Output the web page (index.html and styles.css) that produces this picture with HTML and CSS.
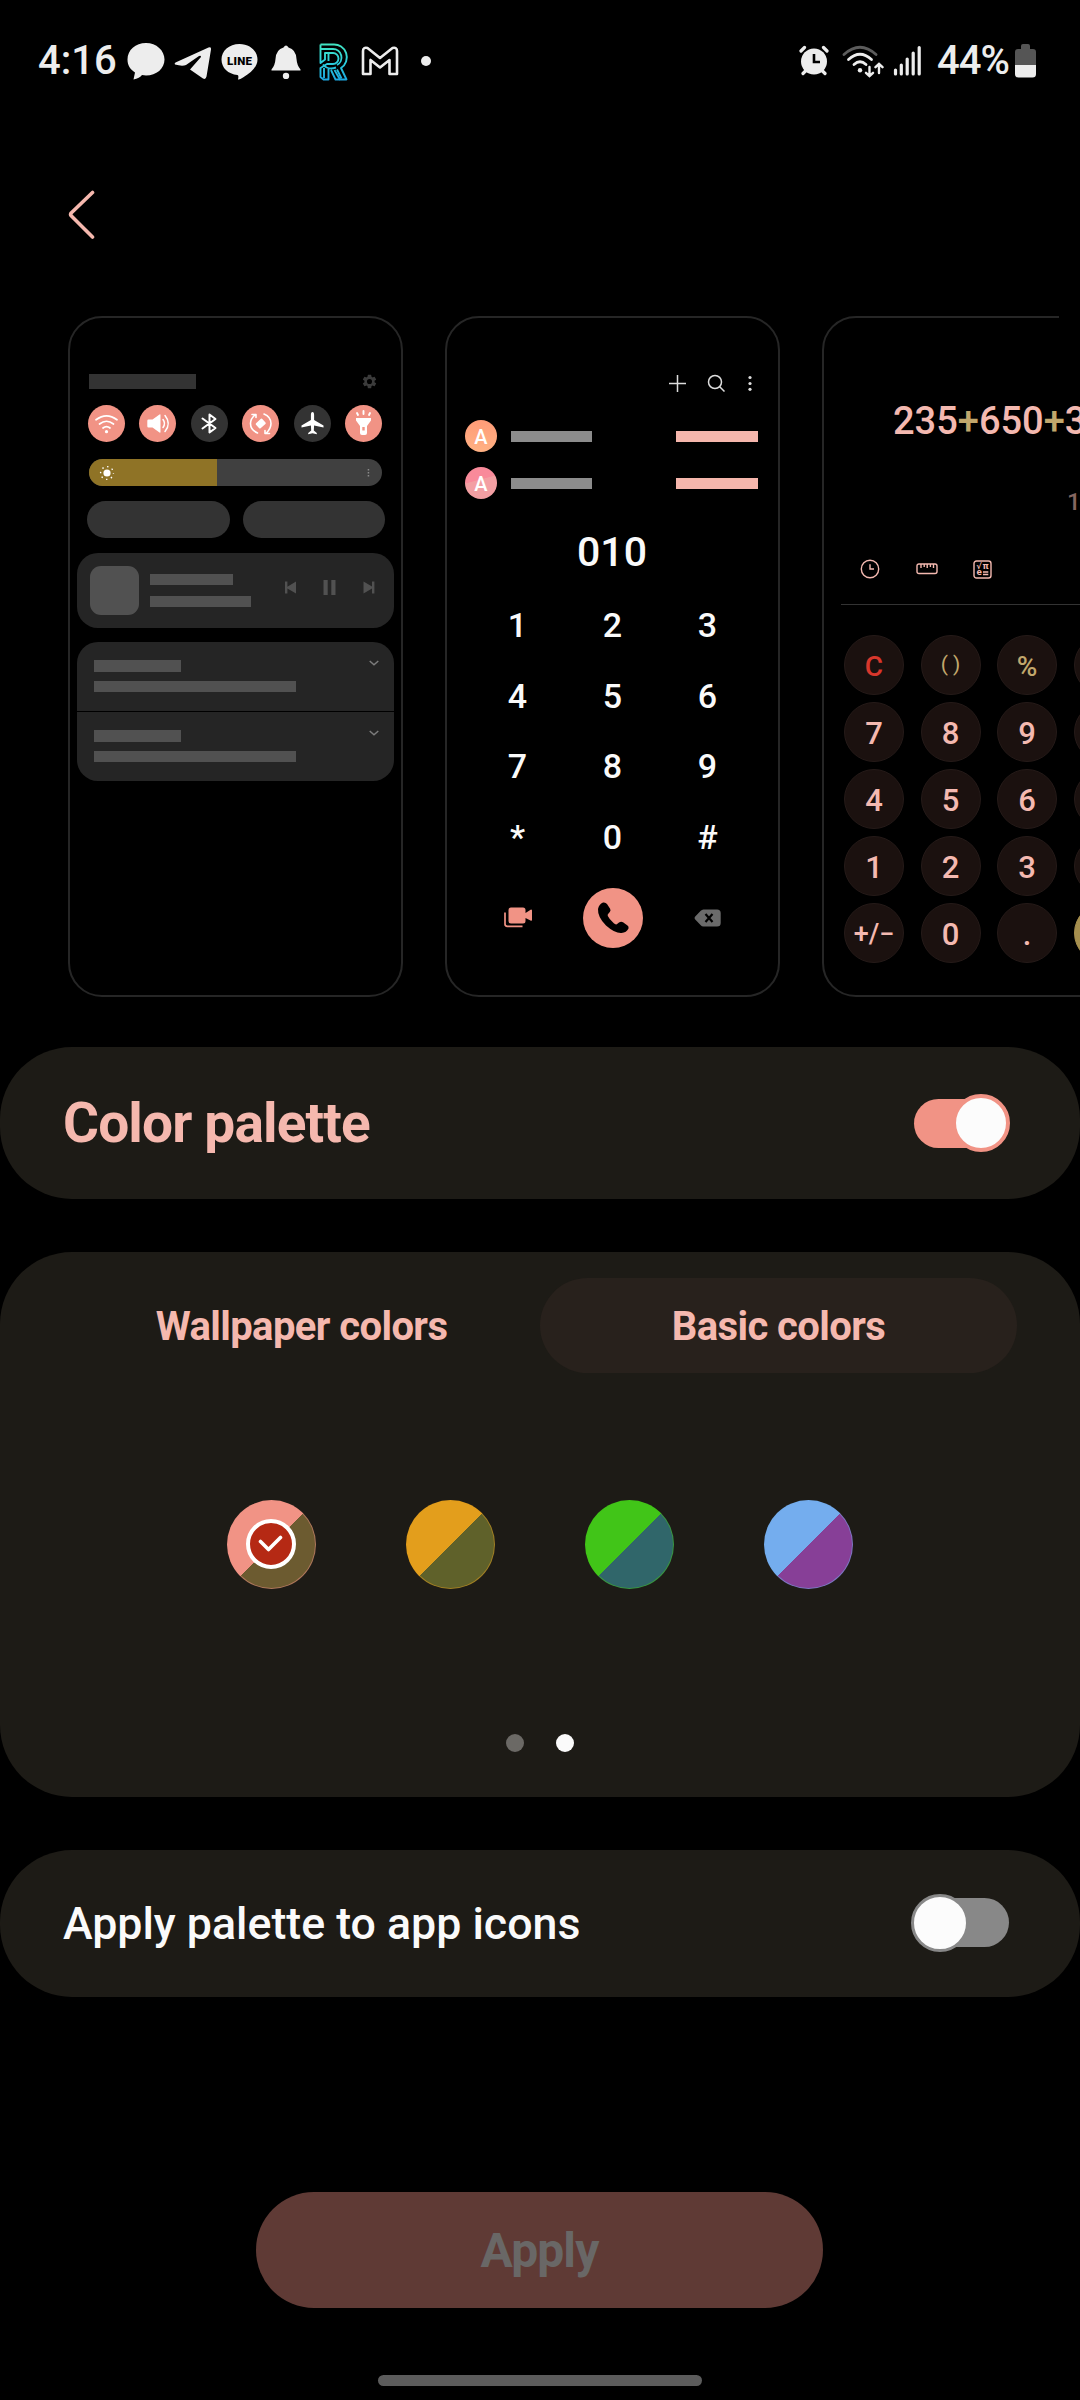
FILE: index.html
```html
<!DOCTYPE html>
<html lang="en">
<head>
<meta charset="utf-8">
<title>Color palette</title>
<link rel="stylesheet" href="styles.css">
</head>
<body>
<div class="screen">
  <header class="status">
    <div class="status-left">
      <span class="time">4:16</span>
      <svg class="ic-chat" width="38" height="38" viewBox="0 0 38 38"><path fill="#ededed" d="M19 1C8.500 1 .5 8 .5 17.500c0 6 3 10 7.500 13l-1.500 7c4-1 7-2.500 8.500-4.500l4 .5c10.500 0 18.500-7 18.500-16S29.500 1 19 1z"/></svg>
      <svg class="ic-plane" width="38" height="34" viewBox="0 0 38 34"><path fill="#ededed" d="M1.500 16.500 34.500 1.500q3-1 2.500 2l-4.500 27q-.8 3.500-3.500 2L16 23.500 27 11q0-2-2-1L12 19q-4 1.500-11-.5-1-1 .5-2z"/></svg>
      <svg class="ic-line" width="37" height="36" viewBox="0 0 37 36"><path fill="#ededed" d="M18.500 0C8 0 .5 7 .5 15.500.5 24 7 30 16.500 31q1.500.5.5 4.500 1.500.500 5-2C30 28.500 36.500 23 36.500 15.500 36.500 7 29 0 18.500 0z"/><text x="18.500" y="21" text-anchor="middle" class="line-label" textLength="25">LINE</text></svg>
      <svg class="ic-bell" width="30" height="34" viewBox="0 0 30 34"><path fill="#ededed" d="M12.500 2.500Q15-1.500 17.500 2.500 25 4.500 25.500 14q.5 6.500 4 10.500v1H.5v-1q3.500-4 4-10.500Q5 4.500 12.500 2.500z"/><circle cx="15" cy="31" r="3.200" fill="#ededed"/></svg>
      <svg class="ic-r" width="30" height="38" viewBox="0 0 30 38"><defs><linearGradient id="rg" gradientUnits="userSpaceOnUse" x1="0" y1="38" x2="0" y2="0"><stop offset="0" stop-color="#1ba5e0"/><stop offset=".5" stop-color="#2ccfdc"/><stop offset="1" stop-color="#43e5c0"/></linearGradient></defs><g fill="none" stroke="url(#rg)" stroke-width="1.900" stroke-linejoin="round"><path d="M1.500 1.500H14a12.800 12.800 0 0 1 8 23.500l5.500 11.500H21L15.500 27M1.500 1.500V20L6 16.500V10h8a4.500 4.500 0 0 1 0 11H8L1.500 25v9l3 2.500h5V26"/><path d="M2 6h12a8.500 8.500 0 0 1 4 16M9.500 10v8M5 25v10M12 27l4.500 9.500H21M18 26.500l4.500 9M4 21.500q5 6 13 3"/></g></svg>
      <svg class="ic-m" width="38" height="30" viewBox="0 0 38 30"><path fill="none" stroke="#ededed" stroke-width="2.600" stroke-linejoin="round" d="M2 28V5q0-4 4.500-3L19 12 31.500 2Q36 1 36 5v23h-7.500V14L19 21.500 9.500 14v14z"/></svg>
      <span class="more-dot"></span>
    </div>
    <div class="status-right">
      <svg class="ic-alarm" width="30" height="31" viewBox="0 0 30 31"><g stroke="#ededed" stroke-width="3.200" stroke-linecap="round"><path d="M2 6l3.500-3.500M28 6l-3.500-3.500M4 28.500l3-3M26 28.500l-3-3"/></g><circle cx="15" cy="16.500" r="13" fill="#ededed"/><path d="M15 9v8h6" fill="none" stroke="#000" stroke-width="2.600"/></svg>
      <svg class="ic-wifi" width="42" height="33" viewBox="0 0 42 33"><g fill="none" stroke-width="2.800" stroke-linecap="round"><path stroke="#5c5c5c" d="M2 9.500Q18 -5 34 9.500"/><path stroke="#ededed" d="M6.500 14.500Q18 4 29.500 14.500M12 19.500Q18 14 24 19.500"/></g><circle cx="18" cy="25.200" r="2.200" fill="#ededed"/><path fill="none" stroke="#ededed" stroke-width="2.400" stroke-linecap="round" d="M27.500 22v9M24 27.800l3.500 3.400 3.500-3.400M37 28v-9M33.500 22.200l3.500-3.400 3.500 3.400"/></svg>
      <svg class="ic-signal" width="29" height="31" viewBox="0 0 29 31"><path stroke="#ededed" stroke-width="3.200" stroke-linecap="round" d="M2.500 25v4M8.300 20v9M14.200 14v15M20.200 8v21M26.200 2.500v26.500"/></svg>
      <span class="percent">44%</span>
      <svg class="ic-battery" width="21" height="34" viewBox="0 0 21 34"><path fill="#555" d="M6 2q0-2 2-2h5q2 0 2 2v3h3q3 0 3 3v14H0V8q0-3 3-3h3z"/><path fill="#ededed" d="M0 21h21v9q0 3.500-3.500 3.500h-14Q0 33.500 0 30z"/></svg>
    </div>
  </header>

  <nav class="appbar">
    <svg width="28" height="50" viewBox="0 0 28 50"><path fill="none" stroke="#f5b8ae" stroke-width="3.600" stroke-linecap="round" stroke-linejoin="round" d="M24.500 2.500 3.200 23q-1.200 1.400 0 2.800L24.500 47"/></svg>
  </nav>

  <section class="previews">
    <div class="phone">
      <div class="qs-head">
        <span class="qs-date"></span>
        <svg width="17" height="17" viewBox="0 0 24 24"><path fill="#3b3b3b" d="M19.140 12.940a7 7 0 0 0 0-1.880l2.030-1.580a.5.5 0 0 0 .12-.61l-1.920-3.320a.5.5 0 0 0-.59-.22l-2.390.96a7 7 0 0 0-1.620-.94l-.36-2.540a.5.500 0 0 0-.48-.41h-3.840a.5.500 0 0 0-.47.41l-.36 2.540a7 7 0 0 0-1.620.94l-2.390-.96a.5.500 0 0 0-.59.220L2.740 8.870a.5.500 0 0 0 .12.610l2.030 1.580a7 7 0 0 0 0 1.880l-2.030 1.580a.5.500 0 0 0-.12.610l1.920 3.320c.12.220.37.290.59.220l2.390-.96c.5.380 1.030.7 1.620.94l.36 2.540c.05.240.24.410.48.410h3.840c.24 0 .44-.17.470-.41l.36-2.540a7 7 0 0 0 1.620-.94l2.390.96c.22.080.47 0 .59-.22l1.920-3.320a.5.500 0 0 0-.12-.61zM12 15.600a3.600 3.600 0 1 1 0-7.200 3.600 3.600 0 0 1 0 7.200z"/></svg>
      </div>
      <div class="qs-toggles">
        <span class="qs on"><svg width="37" height="37" viewBox="0 0 37 37"><g fill="none" stroke="#fff" stroke-width="1.700" stroke-linecap="round"><path d="M8 14.800q10.500-8 21 0M11.500 19q7-5.500 14 0M15 23q3.500-2.800 7 0"/></g><circle cx="18.500" cy="26.700" r="1.600" fill="#fff"/></svg></span>
        <span class="qs on"><svg width="37" height="37" viewBox="0 0 37 37"><path fill="#fff" d="M9.500 14.500h4l7-5q1-.5 1 .5v17q0 1-1 .5l-7-5h-4q-1.200 0-1.200-1.200v-5.600q0-1.200 1.200-1.200z"/><path fill="none" stroke="#fff" stroke-width="1.500" stroke-linecap="round" d="M24 14.500q3 4 0 8M26 10.500q6.500 8 0 16"/></svg></span>
        <span class="qs"><svg width="37" height="37" viewBox="0 0 37 37"><path fill="none" stroke="#fff" stroke-width="2" stroke-linecap="round" stroke-linejoin="round" d="M11.500 13.500 24.500 23 18.500 27.500V9.500L24.500 14 11.500 23.500"/></svg></span>
        <span class="qs on"><svg width="37" height="37" viewBox="0 0 37 37"><g fill="none" stroke="#fff" stroke-width="1.600" stroke-linecap="round" stroke-linejoin="round"><path d="M15.500 28q-7-3-7-9.500 0-5 5-9H10M14 9.500v3M22 9q7 3 7 9.500 0 5-5 10h3.500M23 28.500v-3"/></g><rect x="14.500" y="15.200" width="8.500" height="6.800" rx="1" fill="#fff" transform="rotate(-42 18.700 18.600)"/></svg></span>
        <span class="qs"><svg width="37" height="37" viewBox="0 0 37 37"><path fill="#fff" d="M18.500 7q1.600 0 1.600 3v5l9.400 5.500v2l-9.400-2-.3 5 3 2.500v1.200l-4.300-.9-4.300.9v-1.200l3-2.500-.3-5-9.400 2v-2l9.400-5.500v-5q0-3 1.600-3z"/></svg></span>
        <span class="qs on"><svg width="37" height="37" viewBox="0 0 37 37"><path fill="#fff" fill-rule="evenodd" d="M11 13h15v2.500l-4 5.500V28q0 2-2 2h-3q-2 0-2-2v-7l-4-5.500zM17.300 22v3.500h2.400V22z"/><path stroke="#fff" stroke-width="1.900" stroke-linecap="round" d="M18.500 6v3M12 8l1 2M25 8l-1 2"/></svg></span>
      </div>
      <div class="qs-slider">
        <div class="qs-level"><svg width="16" height="16" viewBox="0 0 16 16"><circle cx="8" cy="8" r="3.600" fill="#fff"/><circle cx="8" cy="8" r="6.400" fill="none" stroke="#fff" stroke-width="1.400" stroke-dasharray="1.400 3.627" stroke-dashoffset=".7"/></svg></div>
        <svg width="3" height="8" viewBox="0 0 3 8"><path fill="#8a8a8a" d="M.7 0h1.500v1.600H.7zM.7 3h1.500v1.600H.7zM.7 6h1.500v1.600H.7z"/></svg>
      </div>
      <div class="qs-pills"><span></span><span></span></div>
      <div class="media">
        <span class="art"></span>
        <div class="lines"><span class="w83"></span><span class="w101"></span></div>
        <svg width="90" height="16" viewBox="0 0 90 16"><path fill="#515151" d="M0 1.500h2.400v5.300L11 1.500v12L2.400 8.500v5H0zM38.500 0h4.200v15h-4.200zM46.300 0h4.200v15h-4.200zM78.500 1.500l8.500 5V1.500h2.400v12H87v-5l-8.500 5z"/></svg>
      </div>
      <div class="notifs">
        <div class="notif"><div class="lines"><span class="w87"></span><span class="w202"></span></div><svg width="10" height="7" viewBox="0 0 10 7"><path fill="none" stroke="#7c7c7c" stroke-width="1.500" d="M.7 1 5 4.800 9.300 1"/></svg></div>
        <div class="notif"><div class="lines"><span class="w87"></span><span class="w202"></span></div><svg width="10" height="7" viewBox="0 0 10 7"><path fill="none" stroke="#7c7c7c" stroke-width="1.500" d="M.7 1 5 4.800 9.300 1"/></svg></div>
      </div>
    </div>

    <div class="phone">
      <div class="dial-tools">
        <svg width="17" height="19" viewBox="0 0 17 19"><path stroke="#ddd" stroke-width="1.500" d="M0 9.500h17M8.500 1v17"/></svg>
        <svg width="18" height="19" viewBox="0 0 18 19"><g fill="none" stroke="#ddd" stroke-width="1.500"><circle cx="8" cy="8" r="6.500"/><path d="M12.500 12.500l5 5"/></g></svg>
        <svg width="4" height="19" viewBox="0 0 4 19"><g fill="#ddd"><circle cx="2" cy="3.500" r="1.600"/><circle cx="2" cy="9.500" r="1.600"/><circle cx="2" cy="15.300" r="1.600"/></g></svg>
      </div>
      <div class="contacts">
        <div class="contact"><span class="avatar orange">A</span><span class="name"></span><span class="match"></span></div>
        <div class="contact"><span class="avatar pink">A</span><span class="name"></span><span class="match"></span></div>
      </div>
      <div class="number">010</div>
      <div class="dialpad">
        <span>1</span><span>2</span><span>3</span>
        <span>4</span><span>5</span><span>6</span>
        <span>7</span><span>8</span><span>9</span>
        <span>*</span><span>0</span><span>#</span>
      </div>
      <div class="dial-actions">
        <svg class="video" width="28" height="21" viewBox="0 0 28 21"><path fill="#f19385" d="M7 .5h12q2.500 0 2.500 2.500v3L27 2.500q1 0 1 1V13q0 1-1 .8L21.500 11v3q0 2.500-2.500 2.500H7Q4.500 16.500 4.500 14V3Q4.500.5 7 .5z"/><path fill="none" stroke="#f19385" stroke-width="1.700" d="M1 5.500v11.500q0 2.300 2.300 2.300H18.500"/></svg>
        <span class="call"><svg width="34" height="34" viewBox="0 0 34 34"><path fill="#000" d="M7 1.500Q3 3 2 8q-.5 8 8 16.500 9 8 15.500 7.500 5-.5 7-4.500.500-2-1-3l-4.500-3.300q-2-1.200-4 .3l-2.200 1.800q-1.500.5-3-1-4.500-4-6-7.300-.5-1.200.5-2.300l1.500-1.700q1.300-1.500.3-3.200L11 3Q9.500 1 7 1.500z"/></svg></span>
        <svg class="back" width="27" height="18" viewBox="0 0 27 18"><path fill="#6b6b6b" d="M9.500.5H23q3.700 0 3.700 3.500v10q0 3.500-3.700 3.500H9.500Q7.800 17.500 6.500 16L1 10.200q-1-1.200 0-2.400L6.500 2Q7.800.5 9.500.5z"/><path stroke="#000" stroke-width="2.200" d="M11.500 5l7 8M18.500 5l-7 8"/></svg>
      </div>
    </div>

    <div class="phone calc">
      <div class="expr">235<i>+</i>650<i>+</i>3</div>
      <div class="result">1</div>
      <div class="calc-tools">
        <svg width="20" height="20" viewBox="0 0 20 20"><g fill="none" stroke="#f4b9b0" stroke-width="1.400"><circle cx="10" cy="10" r="8.700"/><path d="M10 5.200V10h4"/></g></svg>
        <svg width="22" height="12" viewBox="0 0 22 12"><path fill="none" stroke="#f4b9b0" stroke-width="1.400" d="M3 1h16q2 0 2 2v5.500q0 2-2 2H3q-2 0-2-2V3q0-2 2-2zM5 1v4M8.200 1v3M11.200 1v4M14.400 1v3M17.500 1v4"/></svg>
        <svg width="19" height="19" viewBox="0 0 19 19"><rect x="1" y="1" width="17" height="17" rx="2.500" fill="none" stroke="#f4b9b0" stroke-width="1.400"/><g class="calc-glyphs"><text x="3.200" y="8.800">√</text><text x="9.600" y="8.800">π</text><text x="3.600" y="15.400">e</text></g><path stroke="#f4b9b0" stroke-width="1.300" d="M10 12h5.300M10 14.500h5.300"/></svg>
      </div>
      <div class="calc-rule"></div>
      <div class="calc-keys">
        <span class="clear">C</span><span class="op paren">( )</span><span class="op">%</span><span></span>
        <span>7</span><span>8</span><span>9</span><span></span>
        <span>4</span><span>5</span><span>6</span><span></span>
        <span>1</span><span>2</span><span>3</span><span></span>
        <span class="sign">+/−</span><span>0</span><span>.</span><span class="equals"></span>
      </div>
    </div>
  </section>

  <section class="panel palette-switch">
    <h1>Color palette</h1>
    <span class="switch on"><span class="thumb"></span></span>
  </section>

  <section class="panel colors">
    <div class="tabs"><span class="tab">Wallpaper colors</span><span class="tab active">Basic colors</span></div>
    <div class="swatches">
      <span class="swatch coral"><span class="check"><svg width="26" height="20" viewBox="0 0 26 20"><path fill="none" stroke="#fff" stroke-width="3.600" stroke-linecap="round" stroke-linejoin="round" d="M2.500 7.500l8 8L22.500 3.500"/></svg></span></span>
      <span class="swatch amber"></span>
      <span class="swatch green"></span>
      <span class="swatch blue"></span>
    </div>
    <div class="dots"><span></span><span class="current"></span></div>
  </section>

  <section class="panel icons-switch">
    <h2>Apply palette to app icons</h2>
    <span class="switch"><span class="thumb"></span></span>
  </section>

  <button class="apply">Apply</button>
  <div class="home"></div>
</div>
</body>
</html>
```

FILE: styles.css
```css
* { box-sizing: border-box; }
body { margin: 0; background: #000; font-family: Roboto, sans-serif; font-weight: 500; }
svg { display: block; flex: none; }
h1, h2 { margin: 0; }

.screen { width: 1080px; height: 2400px; background: #000; overflow: hidden; display: flex; flex-direction: column; }

/* Status bar */
.status { height: 120px; display: flex; justify-content: space-between; padding: 0 44px 0 38px; color: #ededed; flex: none; }
.status-left, .status-right { display: flex; align-items: center; }
.time, .percent { font-size: 40px; line-height: 40px; padding-top: 1px; }
.time { width: 89px; }
.ic-chat { margin-top: 2px; }
.ic-plane { margin: 5px 0 0 9px; }
.ic-line { margin: 3px 0 0 9px; }
.line-label { font: 900 11.500px Roboto, sans-serif; fill: #000; }
.ic-bell { margin: 3px 0 0 13px; }
.ic-r { margin: 3px 0 0 18px; }
.ic-m { margin: 2px 0 0 12px; }
.more-dot { width: 10px; height: 10px; border-radius: 50%; background: #ededed; margin: 2px 0 0 22px; }
.ic-alarm { margin-left: 1px; }
.ic-wifi { margin: 2px 0 0 13px; }
.ic-signal { margin: 1px 0 0 9px; }
.percent { margin-left: 15px; width: 78px; letter-spacing: -1px; }
.ic-battery { margin-top: 2px; }

.appbar { height: 196px; padding: 70px 0 0 68px; flex: none; }

/* Preview carousel */
.previews { display: flex; gap: 42px; padding-left: 68px; height: 681px; flex: none; }
.phone { width: 335px; height: 681px; flex: none; border: 2px solid #262626; border-radius: 34px; display: flex; flex-direction: column; }

.qs-head { margin: 56px 23px 0 19px; height: 15px; display: flex; justify-content: space-between; align-items: center; }
.qs-date { width: 107px; height: 15px; background: #333; }
.qs-toggles { margin: 16px 19px 0 18px; display: flex; justify-content: space-between; }
.qs { width: 37px; height: 37px; border-radius: 50%; background: #333; }
.qs.on { background: #f19385; }
.qs-slider { margin: 17px 19px 0 19px; height: 27px; border-radius: 14px; background: #404040; overflow: hidden; display: flex; align-items: center; justify-content: space-between; padding-right: 12px; }
.qs-level { width: 128px; height: 27px; background: #8f7326; display: flex; align-items: center; padding-left: 10px; }
.qs-pills { margin: 15px 16px 0 17px; display: flex; gap: 13px; }
.qs-pills span { flex: 1; height: 37px; border-radius: 19px; background: #333; }
.media { margin: 15px 7px 0; height: 75px; border-radius: 21px; background: #252525; display: flex; padding: 13px 19px 0 13px; }
.art { width: 49px; height: 49px; border-radius: 11px; background: #515151; }
.lines { display: flex; flex-direction: column; }
.lines span { height: 11px; background: #515151; }
.media .lines { margin: 8px auto 0 11px; gap: 11px; }
.media svg { margin-top: 14px; }
.w83 { width: 83px; }
.w101 { width: 101px; }
.w87 { width: 87px; }
.w202 { width: 202px; }
.notifs { margin: 14px 7px 0; display: flex; flex-direction: column; gap: 1px; border-radius: 21px; overflow: hidden; }
.notif { height: 69px; background: #252525; display: flex; justify-content: space-between; padding: 18px 15px 0 17px; }
.notif .lines { gap: 9px; }
.notif .lines .w87 { height: 12px; }

.dial-tools { margin: 56px 26px 0 0; display: flex; justify-content: flex-end; }
.dial-tools svg:nth-child(2) { margin: 0 23px 0 21px; }
.contacts { margin: 27px 20px 0 18px; display: flex; flex-direction: column; gap: 15px; }
.contact { height: 32px; display: flex; align-items: center; }
.avatar { width: 32px; height: 32px; border-radius: 50%; color: #fff; font-size: 20px; line-height: 34px; text-align: center; }
.avatar.orange { background: linear-gradient(#ff9c78, #ffb183); }
.avatar.pink { background: linear-gradient(165deg, #f98a9a 40%, #f39fa3 42%); }
.name { width: 81px; height: 11px; background: #8c8c8c; margin-left: 14px; }
.match { width: 82px; height: 11px; background: #f5b6ac; margin-left: auto; }
.number { margin: 33px 1px 0 0; height: 40px; font-size: 41px; line-height: 40px; color: #fafafa; text-align: center; }
.dialpad { margin: 18px 0 0 23px; display: grid; grid-template-columns: repeat(3, 95px); grid-auto-rows: 70.700px; }
.dialpad span { font-size: 34px; line-height: 71px; color: #fafafa; text-align: center; }
.dial-actions { margin: 15px 0 0 23px; display: grid; grid-template-columns: repeat(3, 95px); align-items: center; justify-items: center; }
.call { width: 60px; height: 60px; border-radius: 50%; background: #f19385; display: flex; align-items: center; justify-content: center; }

.calc { position: relative; }
.calc::after { content: ""; position: absolute; top: -2px; left: 235px; width: 60px; height: 2px; background: #000; }
.expr { margin: 83px 0 0 69px; height: 40px; font-size: 38px; line-height: 40px; color: #f4b9b0; white-space: nowrap; }
.expr i { font-style: normal; color: #c1a76c; }
.result { margin: 47px 0 0 243px; height: 28px; font-size: 24px; line-height: 28px; color: #866660; }
.calc-tools { margin: 43px 0 0 36px; display: flex; align-items: center; }
.calc-tools svg:nth-child(2) { margin: 0 35px 0 36px; }
.calc-glyphs { font: 700 8px "DejaVu Sans", sans-serif; fill: #f4b9b0; }
.calc-rule { margin: 25px 0 0 17px; height: 1px; background: #333; }
.calc-keys { margin: 30px 0 0 20px; display: grid; grid-template-columns: repeat(4, 60px); grid-auto-rows: 60px; gap: 7px 16.500px; }
.calc-keys span { border-radius: 50%; background: #1b110f; border: 1px solid #251a18; font-size: 31px; line-height: 61px; text-align: center; color: #f4b9b0; }
.calc-keys .clear { color: #d7372c; font-size: 28px; }
.calc-keys .op { color: #c1a76c; font-size: 28px; }
.calc-keys .paren { font-size: 21px; line-height: 56px; font-weight: 400; }
.calc-keys .sign { font-size: 27px; }
.calc-keys .equals { background: #a68f4e; border-color: #a68f4e; }

/* Settings panels */
.panel { background: #1d1b16; border-radius: 72px; flex: none; }
.palette-switch, .icons-switch { display: flex; align-items: center; justify-content: space-between; padding: 0 71px 0 63px; }
.palette-switch { margin-top: 50px; height: 152px; }
.palette-switch h1 { font-size: 55px; line-height: 60px; font-weight: 700; letter-spacing: -0.850px; color: #f5b8ae; }
.switch { width: 96px; height: 49px; border-radius: 25px; background: #888; display: flex; align-items: center; }
.switch.on { width: 95px; background: #f19385; justify-content: flex-end; }
.thumb { width: 58px; height: 58px; border-radius: 50%; border: 3px solid #888; background: #fcfcfc; margin-left: -2px; flex: none; }
.switch.on .thumb { border: 4px solid #f19385; margin: 0 -1px 0 0; }
.icons-switch .switch { margin-bottom: 2px; }

.colors { margin-top: 53px; height: 545px; padding-top: 26px; }
.tabs { display: flex; padding: 0 63px; }
.tab { flex: 1; height: 95px; border-radius: 48px; line-height: 98px; font-size: 40px; font-weight: 700; letter-spacing: -0.600px; color: #f5b8ae; text-align: center; }
.tab.active { background: #28211c; }
.swatches { margin: 127px 0 0 227px; display: flex; gap: 90px; }
.swatch { width: 89px; height: 89px; border-radius: 50%; display: flex; align-items: center; justify-content: center; border: 1px solid; }
.coral { background: linear-gradient(135deg, #f19385 50%, #6c5b30 50.500%) border-box; border-color: #f1938580; }
.amber { background: linear-gradient(135deg, #e39e1c 50%, #5f612a 50.500%) border-box; border-color: #e39e1c80; }
.green { background: linear-gradient(135deg, #41c518 50%, #30666a 50.500%) border-box; border-color: #41c51880; }
.blue { background: linear-gradient(135deg, #74adee 50%, #873f97 50.500%) border-box; border-color: #74adee80; }
.check { width: 50px; height: 50px; margin: 0 1px 1px 0; border-radius: 50%; border: 4px solid #fff; background: #b52914; display: flex; align-items: center; justify-content: center; }
.dots { margin-top: 145px; display: flex; justify-content: center; gap: 32px; }
.dots span { width: 18px; height: 18px; border-radius: 50%; background: #6b6965; }
.dots .current { background: #fafafa; }

.icons-switch { margin-top: 53px; height: 147px; }
.icons-switch h2 { font-size: 44.700px; line-height: 50px; font-weight: 500; color: #fafafa; }

.apply { margin: 195px 0 0 256px; width: 567px; height: 116px; border: 0; border-radius: 58px; background: #5f3a35; color: #696766; font: 700 48px/116px Roboto, sans-serif; letter-spacing: -0.900px; padding: 1px 0 0; flex: none; }
.home { margin: 67px 0 0 378px; width: 324px; height: 11px; border-radius: 6px; background: #5c5c5c; flex: none; }
```
